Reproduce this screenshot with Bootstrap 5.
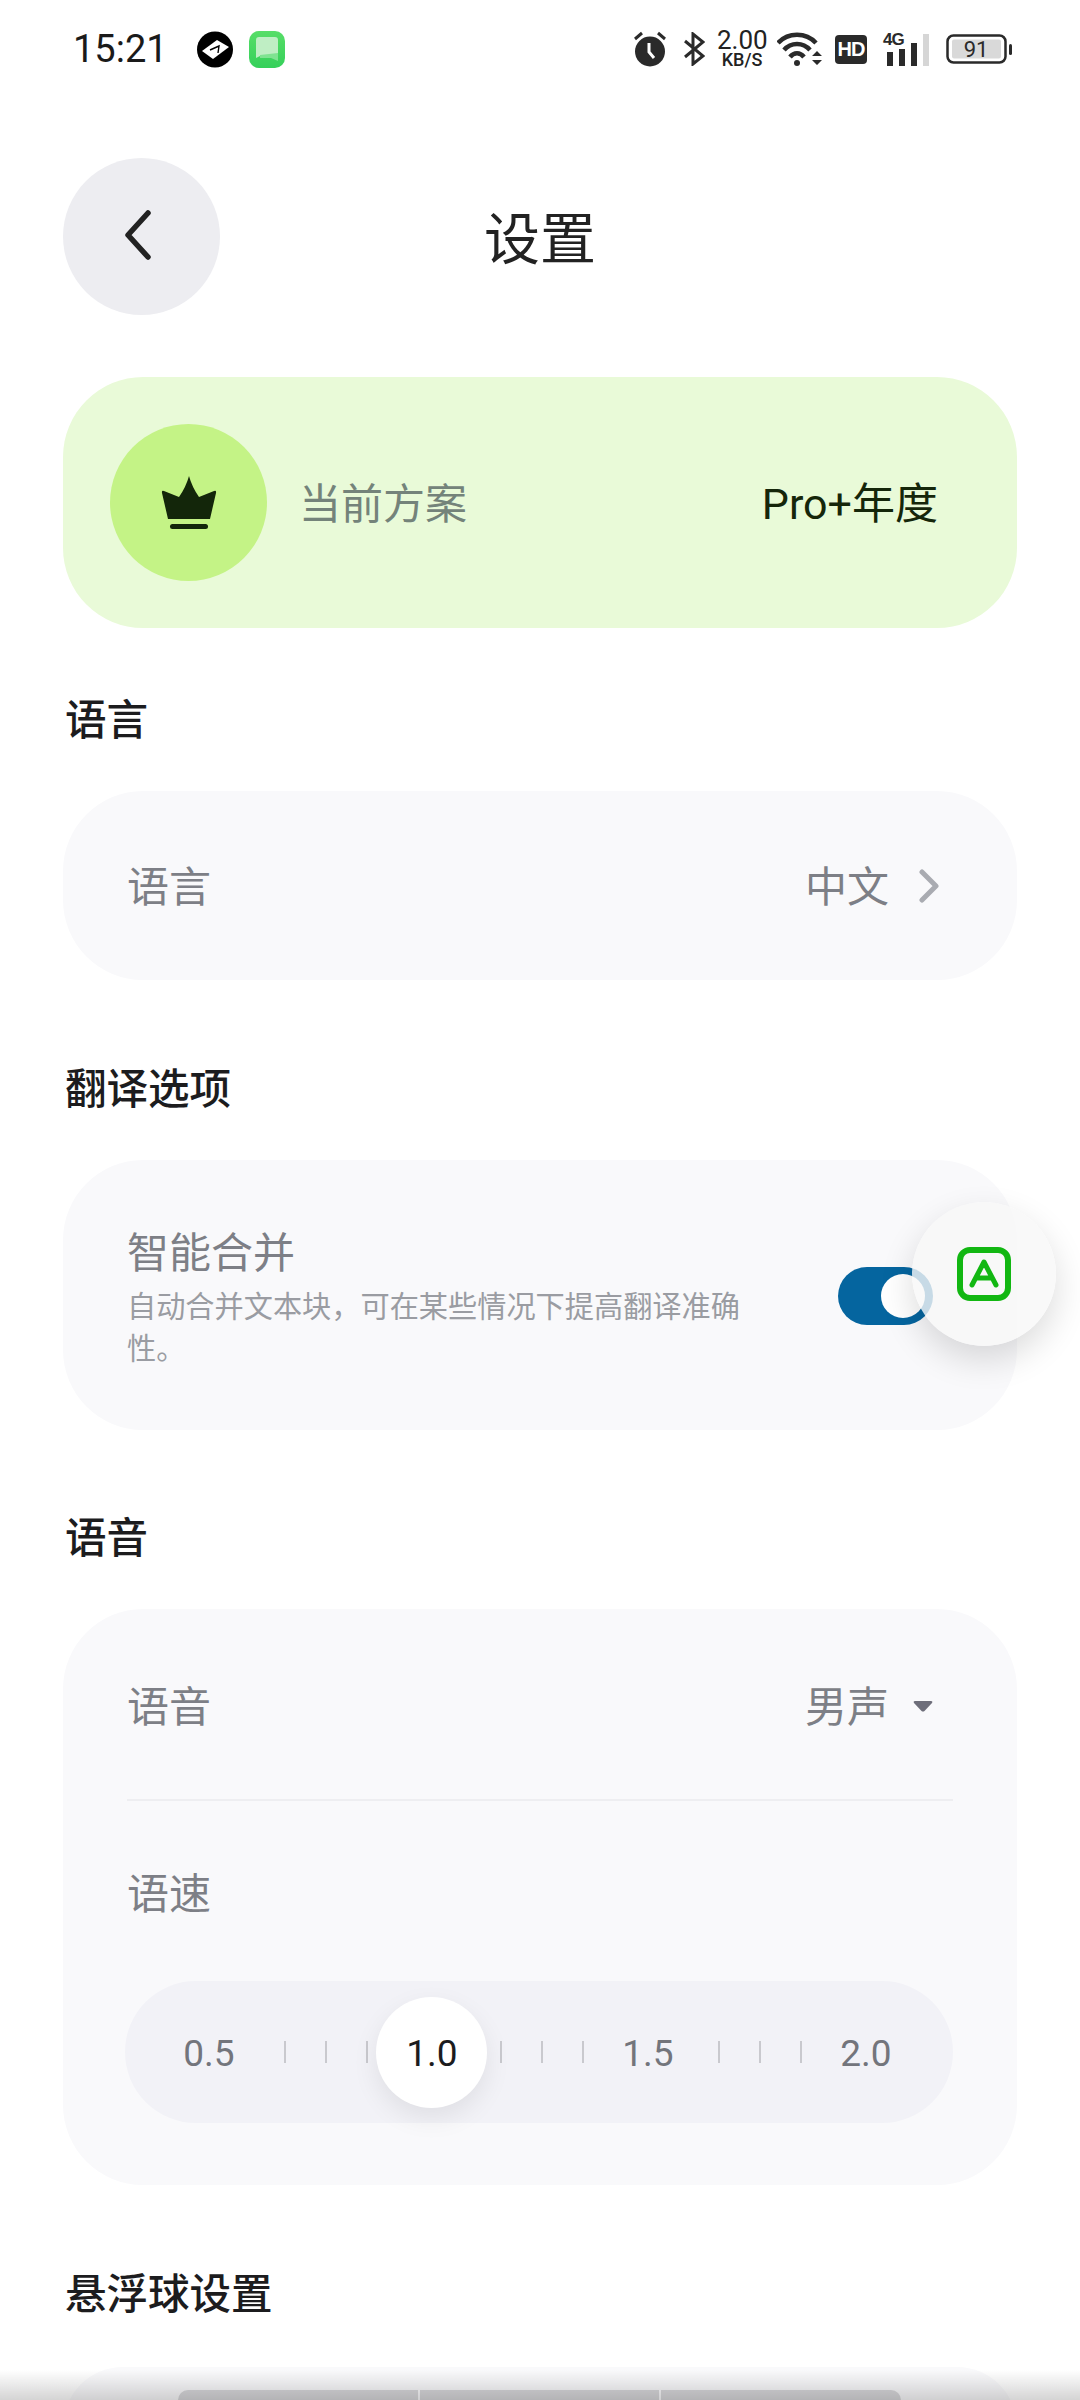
<!DOCTYPE html>
<html lang="zh-CN">
<head>
  <meta charset="UTF-8">
  <title>设置</title>
  <link href="https://cdn.jsdelivr.net/npm/bootstrap@5.3.3/dist/css/bootstrap.min.css" rel="stylesheet">
  <style>
    body {
      background: #fff;
      font-family: Roboto, "Noto Sans CJK SC", sans-serif;
      color: #1c1c1e;
    }
    .phone { width: 1080px; height: 2400px; overflow: hidden; }

    /* status bar */
    .status-bar { height: 98px; padding: 0 68px 0 73px; }
    .clock { font-size: 38px; line-height: 1; color: #1a1a1a; width: 124px; }
    .speed { width: 50px; margin: 0 10px 0 12px; color: #222; text-align: center; white-space: pre; font-weight: 500; font-size: 18px; line-height: 18px; }
    .speed::first-line { font-size: 26px; line-height: 22px; font-weight: 400; }
    .hd-tag { width: 32px; height: 29px; margin-left: 12px; border-radius: 4px; background: #2a2a2a; color: #fff; font: 700 20px/29px "Liberation Sans", sans-serif; letter-spacing: -1px; text-align: center; }
    .signal-box { width: 47px; height: 33px; }
    .net-tag { left: 0; top: 0; color: #2a2a2a; font: 700 17px/14px "Liberation Sans", sans-serif; letter-spacing: -1px; }

    /* header */
    .top-row { margin-top: 60px; padding: 0 63px; height: 157px; }
    .back-btn { width: 157px; height: 157px; background: #ededf1; border: 0; flex: none; }
    .back-btn svg { margin: 0 8px 4px 0; }
    .page-title { font-size: 56px; font-weight: 400; line-height: 1; margin: 0 157px 0 0; padding-top: 6px; flex: 1; text-align: center; color: #222; }

    /* plan card */
    .plan-card { margin: 62px 63px 0; height: 251px; border-radius: 80px; background: #e9fad8; padding: 0 79px 0 47px; }
    .plan-icon { width: 157px; height: 157px; background: #c4f386; flex: none; }
    .plan-name { font-size: 42px; color: #74837a; margin-left: 32px; padding-top: 4px; }
    .plan-value { font-size: 43px; color: #15260a; padding-top: 4px; }

    /* sections */
    .sect { margin: 80px 63px 0; }
    .sect-first { margin-top: 63px; }
    .sect-title { font-size: 41.5px; font-weight: 500; line-height: 56px; margin: 0 0 44px 2px; color: #1c1c1e; padding-top: 2px; height: 56px; }
    .set-card { background: #f9f9fb; border-radius: 80px; }
    .lang-row { height: 189px; padding: 0 77px 0 64px; }
    .set-label { font-size: 42px; line-height: 56px; color: #7d7f86; padding-top: 5px; }
    .chev { margin-left: 29px; }

    .merge-row { padding: 63px 84px 61px 64px; }
    .merge-text { width: 630px; }
    .merge-text .set-label { height: 56px; padding-top: 3px; }
    .merge-sub { font-size: 29.2px; line-height: 42px; color: #9a9ca2; margin-top: 7px; margin-bottom: -1px; }

    .toggle-track { width: 95px; height: 58px; border-radius: 29px; background: #05659f; flex: none; }
    .toggle-knob { right: 8px; top: 7px; width: 44px; height: 44px; background: #fff; }

    /* the ball is see-through, the switch shows faintly under it */
    .float-ball { left: 912px; top: 1202px; width: 144px; height: 144px; background: rgba(247,247,248,.8); box-shadow: 0 14px 34px rgba(0,0,0,.14); }

    .voice-card { padding-bottom: 62px; }
    .voice-row { height: 192px; padding: 1px 84px 0 64px; margin: 0; }
    .voice-line { margin: -2px 64px 0; height: 2px; background: #eeeef1; }
    .speed-row { margin: 61px 64px 0; height: 56px; }
    .speed-track { margin: 63px 64px 0 62px; height: 142px; border-radius: 71px; background: #f2f2f7; padding-left: 39px; }
    .speed-num { width: 90px; text-align: center; font-size: 37px; color: #73757c; line-height: 1; flex: none; padding-top: 2px; }
    .speed-num.on { color: #1c1c1e; z-index: 0; }
    .speed-num.on::before {
      content: ""; position: absolute; left: 50%; top: 50%; width: 111px; height: 111px;
      margin: -55px 0 0 -56px; border-radius: 50%; background: #fff; z-index: -1;
      box-shadow: 0 10px 26px rgba(0,0,0,.08);
    }
    .tick-group { width: 123px; flex: none; margin-left: 3px; }
    .tick-group.g1 { margin-left: 10px; }
    .tick-group.g3 { margin-left: 5px; }
    .tick-group span { width: 41px; display: flex; justify-content: center; }
    .tick-group span::before { content: ""; width: 2px; height: 22px; background: #c9c9ce; }

    .seg-wrap { padding: 23px 116px 0 115px; gap: 2px; height: 120px; }
    .seg { height: 40px; background: #d8d8db; flex: 1; }
    .seg:first-child { border-top-left-radius: 10px; }
    .seg:last-child { border-top-right-radius: 10px; }
    .bottom-fade { left: 0; right: 0; bottom: 0; height: 30px; background: linear-gradient(rgba(0,0,0,0), rgba(0,0,0,.17)); }
  </style>
</head>
<body>

<div class="phone position-relative">

  <!-- status bar -->
  <div class="status-bar d-flex align-items-center">
    <div class="clock">15:21</div>
    <svg width="36" height="37" viewBox="0 0 36 37">
      <circle cx="18" cy="18.5" r="18" fill="#000"/>
      <path d="M20 9 L32 16 L16 28 L5 20 Z" fill="#fff"/>
      <path d="M13 19 L22 15 L21 22" fill="none" stroke="#000" stroke-width="1.4"/>
    </svg>
    <svg class="ms-3" width="36" height="37" viewBox="0 0 36 37">
      <defs>
        <linearGradient id="msgBg" x1="0" y1="0" x2="0" y2="1">
          <stop offset="0" stop-color="#57de68"/><stop offset="1" stop-color="#35d05a"/>
        </linearGradient>
      </defs>
      <rect width="36" height="37" rx="10" fill="url(#msgBg)"/>
      <path d="M7 9 Q7 6 10 6 H26 Q29 6 29 9 V22 Q29 24 27 24 H13 L7 27 Z" fill="#bfeec4"/>
      <path d="M11 24 L29 22 V30 L22 27 H11 Z" fill="#7fe391"/>
    </svg>

    <div class="ms-auto d-flex align-items-center">
      <svg width="34" height="36" viewBox="0 0 34 36">
        <circle cx="17" cy="20.500" r="15" fill="#2a2a2a"/>
        <path d="M16 12 V21 L21 27" fill="none" stroke="#fff" stroke-width="3"/>
        <path d="M2 8 L9 2 M32 8 L25 2" stroke="#2a2a2a" stroke-width="3"/>
      </svg>
      <svg class="ms-3" width="22" height="34" viewBox="0 0 22 34">
        <path d="M2 9 L20 24 L10 32 V2 L20 10 L2 25" fill="none" stroke="#2a2a2a" stroke-width="3"/>
      </svg>
      <div class="speed">2.00
KB/S</div>
      <svg width="46" height="35" viewBox="0 0 46 35">
        <path d="M1 11 C11 0 29 0 39 11" fill="none" stroke="#2a2a2a" stroke-width="4.500"/>
        <path d="M7 18 C14 10 26 10 33 18" fill="none" stroke="#2a2a2a" stroke-width="4.500"/>
        <path d="M13 25 C17 20 23 20 27 25" fill="none" stroke="#2a2a2a" stroke-width="4.500"/>
        <circle cx="20" cy="31" r="3" fill="#2a2a2a"/>
        <path d="M35 24 L40 19 L45 24 Z M35 28 H45 L40 33 Z" fill="#2a2a2a"/>
      </svg>
      <div class="hd-tag">HD</div>
      <div class="signal-box position-relative ms-3">
        <span class="net-tag position-absolute">4G</span>
        <svg class="d-block" width="47" height="33" viewBox="0 0 47 33">
          <rect x="4" y="19" width="6" height="14" fill="#2a2a2a"/>
          <rect x="16" y="16" width="6" height="17" fill="#2a2a2a"/>
          <rect x="28" y="10" width="6" height="23" fill="#2a2a2a"/>
          <rect x="40" y="1" width="6" height="32" fill="#d6d6d6"/>
        </svg>
      </div>
      <svg class="ms-3" width="66" height="30" viewBox="0 0 66 30">
        <rect x="1.500" y="1.500" width="58" height="27" rx="6" fill="#fff" stroke="#2a2a2a" stroke-width="2.500"/>
        <rect x="6" y="5.500" width="49" height="19" rx="2" fill="#d9d9d9"/>
        <rect x="63" y="10" width="3" height="11" rx="1.500" fill="#2a2a2a"/>
        <text x="30" y="23" text-anchor="middle" font-family="Roboto, sans-serif" font-size="22" fill="#2a2a2a">91</text>
      </svg>
    </div>
  </div>

  <!-- header -->
  <div class="top-row d-flex align-items-center">
    <button type="button" class="btn back-btn rounded-circle p-0 d-flex align-items-center justify-content-center" aria-label="返回">
      <svg width="30" height="52" viewBox="0 0 30 52">
        <path d="M25 4 L5 26 L25 48" fill="none" stroke="#222" stroke-width="5.500" stroke-linecap="round" stroke-linejoin="round"/>
      </svg>
    </button>
    <h1 class="page-title">设置</h1>
  </div>

  <!-- current plan -->
  <div class="plan-card d-flex align-items-center">
    <div class="plan-icon rounded-circle d-flex align-items-center justify-content-center">
      <svg width="56" height="54" viewBox="0 0 56 54">
        <path d="M28 0 Q31 11 38 21 L53 15 Q55.500 14 55 17 L49 43 H7 L1 17 Q.5 14 3 15 L18 21 Q25 11 28 0 Z" fill="#13260a"/>
        <rect x="9" y="48" width="38" height="5" rx="2.500" fill="#13260a"/>
      </svg>
    </div>
    <div class="plan-name">当前方案</div>
    <div class="plan-value ms-auto">Pro+年度</div>
  </div>

  <!-- language -->
  <section class="sect sect-first">
    <h2 class="sect-title">语言</h2>
    <div class="set-card lang-row d-flex align-items-center">
      <div class="set-label">语言</div>
      <div class="set-label ms-auto">中文</div>
      <svg class="chev" width="22" height="34" viewBox="0 0 22 34">
        <path d="M4 3 L18 17 L4 31" fill="none" stroke="#a9abb1" stroke-width="5" stroke-linecap="round" stroke-linejoin="round"/>
      </svg>
    </div>
  </section>

  <!-- translate options -->
  <section class="sect">
    <h2 class="sect-title">翻译选项</h2>
    <div class="set-card merge-row d-flex align-items-center justify-content-between">
      <div class="merge-text">
        <div class="set-label">智能合并</div>
        <div class="merge-sub">自动合并文本块，可在某些情况下提高翻译准确性。</div>
      </div>
      <div class="toggle-track position-relative" role="switch" aria-checked="true">
        <span class="toggle-knob position-absolute rounded-circle"></span>
      </div>
    </div>
  </section>

  <!-- voice -->
  <section class="sect" style="margin-top:79px">
    <h2 class="sect-title">语音</h2>
    <div class="set-card voice-card">
      <div class="voice-row d-flex align-items-center">
        <div class="set-label">语音</div>
        <div class="set-label ms-auto">男声</div>
        <svg class="ms-4" width="20" height="12" viewBox="0 0 20 12">
          <path d="M2 1 H18 Q20 1 19 3 L11.500 11 Q10 12 8.500 11 L1 3 Q0 1 2 1 Z" fill="#6e6e7a"/>
        </svg>
      </div>
      <div class="voice-line"></div>
      <div class="speed-row set-label">语速</div>
      <div class="speed-track d-flex align-items-center">
        <div class="speed-num">0.5</div>
        <div class="tick-group g1 d-flex"><span></span><span></span><span></span></div>
        <div class="speed-num on position-relative">1.0</div>
        <div class="tick-group d-flex"><span></span><span></span><span></span></div>
        <div class="speed-num">1.5</div>
        <div class="tick-group g3 d-flex"><span></span><span></span><span></span></div>
        <div class="speed-num">2.0</div>
      </div>
    </div>
  </section>

  <!-- floating ball settings, cut off by the screen edge -->
  <section class="sect">
    <h2 class="sect-title" style="margin-bottom:46px">悬浮球设置</h2>
    <div class="set-card seg-wrap d-flex">
      <div class="seg"></div>
      <div class="seg"></div>
      <div class="seg"></div>
    </div>
  </section>

  <!-- floating ball -->
  <div class="float-ball position-absolute rounded-circle d-flex align-items-center justify-content-center">
    <svg width="54" height="54" viewBox="0 0 54 54">
      <rect x="3" y="3" width="48" height="48" rx="10" fill="none" stroke="#12b712" stroke-width="6"/>
      <path d="M15 38 L27 15 L39 38 M19.500 31 H34.500" fill="none" stroke="#12b712" stroke-width="5" stroke-linecap="round" stroke-linejoin="round"/>
    </svg>
  </div>

  <div class="bottom-fade position-absolute"></div>
</div>

<script src="https://cdn.jsdelivr.net/npm/bootstrap@5.3.3/dist/js/bootstrap.bundle.min.js"></script>
</body>
</html>
